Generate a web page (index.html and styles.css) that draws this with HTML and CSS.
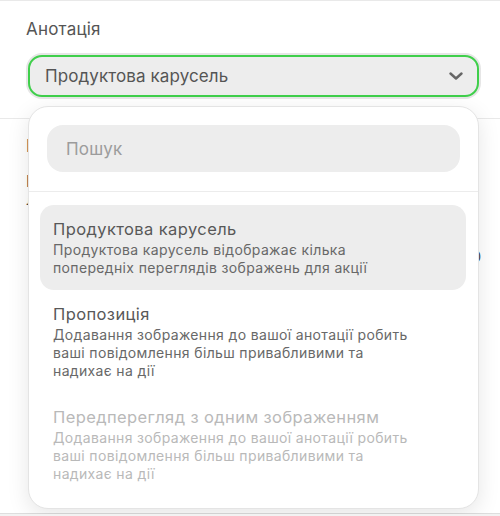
FILE: index.html
```html
<!DOCTYPE html>
<html lang="uk">
<head>
<meta charset="utf-8">
<link rel="stylesheet" href="styles.css">
</head>
<body>
<div class="screen">
  <section class="field">
    <div class="label">Анотація</div>
    <div class="select-wrap">
      <div class="select">
        <span class="select-value">Продуктова карусель</span>
        <svg class="chevron" width="14" height="8" viewBox="0 0 14 8"><path d="M1.5 1.5 L7 6.5 L12.5 1.5" fill="none" stroke="#666" stroke-width="2.4" stroke-linecap="round" stroke-linejoin="round"/></svg>
      </div>
      <div class="menu">
        <div class="search-box">
          <div class="search">Пошук</div>
        </div>
        <ul class="options">
          <li class="option active">
            <div class="opt-title">Продуктова карусель</div>
            <div class="opt-desc">Продуктова карусель відображає кілька попередніх переглядів зображень для акції</div>
          </li>
          <li class="option">
            <div class="opt-title">Пропозиція</div>
            <div class="opt-desc">Додавання зображення до вашої анотації робить ваші повідомлення більш привабливими та надихає на дії</div>
          </li>
          <li class="option disabled">
            <div class="opt-title">Передперегляд з одним зображенням</div>
            <div class="opt-desc">Додавання зображення до вашої анотації робить ваші повідомлення більш привабливими та надихає на дії</div>
          </li>
        </ul>
      </div>
    </div>
  </section>
  <section class="field-under">
    <div class="under-label">Ціль</div>
    <div class="under-text">Введіть назву</div>
    <div class="under-text small">Ліміт символів</div>
    <div class="under-count">0/50</div>
  </section>
</div>
</body>
</html>
```
FILE: styles.css
```css
* { box-sizing: border-box; }
html, body { margin: 0; padding: 0; }
body {
  background: #f2f2f2;
  font-family: Inter, "Noto Sans", sans-serif;
  color: #555;
}
.screen {
  width: 500px;
  height: 514px;
  background: #fff;
  border-top: 1px solid #e9e9e9;
  border-bottom: 1px solid #dedede;
}
.field {
  padding: 18px 19px 21px 26px;
  border-bottom: 1px solid #e9e9e9;
}
.label {
  font-size: 17px;
  line-height: 20px;
  letter-spacing: 0.2px;
  color: #555;
}
.select-wrap {
  position: relative;
  margin: 16px 2px 0;
}
.select {
  height: 42px;
  border: 2px solid #3fcf4b;
  border-radius: 14px;
  background: #ededed;
  box-shadow: 0 0 0 2px #e6e6e6;
  display: flex;
  align-items: center;
  justify-content: space-between;
  padding: 0 14px 0 15px;
}
.select-value {
  font-size: 17px;
  line-height: 20px;
  letter-spacing: 0.1px;
  color: #555;
}
.chevron { display: block; }
.menu {
  position: absolute;
  left: 0;
  right: 0;
  top: 51px;
  background: #fff;
  border: 1px solid #e4e4e4;
  border-radius: 20px;
  box-shadow: 0 6px 22px rgba(0,0,0,0.10);
  z-index: 2;
}
.search-box {
  padding: 18px 18px 19px;
  border-bottom: 1px solid #ececec;
}
.search {
  height: 47px;
  border-radius: 16px;
  background: #ededed;
  padding: 0 19px;
  display: flex;
  align-items: center;
  font-size: 17px;
  letter-spacing: 0.2px;
  color: #9c9c9c;
}
.options {
  list-style: none;
  margin: 0;
  padding: 13px 12px 12px 11px;
}
.option {
  padding: 14px 13px 13px;
  border-radius: 14px;
}
.option.active { background: #ededed; }
.opt-title {
  font-size: 16.5px;
  line-height: 20px;
  letter-spacing: 0.4px;
  color: #585858;
  margin-bottom: 2px;
}
.opt-desc {
  max-width: 372px;
  font-size: 14px;
  line-height: 18px;
  letter-spacing: 0.35px;
  color: #686868;
}
.option.disabled .opt-title,
.option.disabled .opt-desc { color: #b9b9b9; }
.field-under {
  position: relative;
  padding: 17px 19px 0 26px;
}
.under-label {
  font-size: 17px;
  line-height: 20px;
  color: #444;
}
.under-text {
  margin-top: 15px;
  font-size: 16px;
  line-height: 20px;
  color: #444;
}
.under-text.small { margin-top: 0; font-size: 14px; line-height: 18px; }
.under-count {
  margin-top: 38px;
  text-align: right;
  font-size: 14px;
  line-height: 20px;
  color: #444;
}
```
